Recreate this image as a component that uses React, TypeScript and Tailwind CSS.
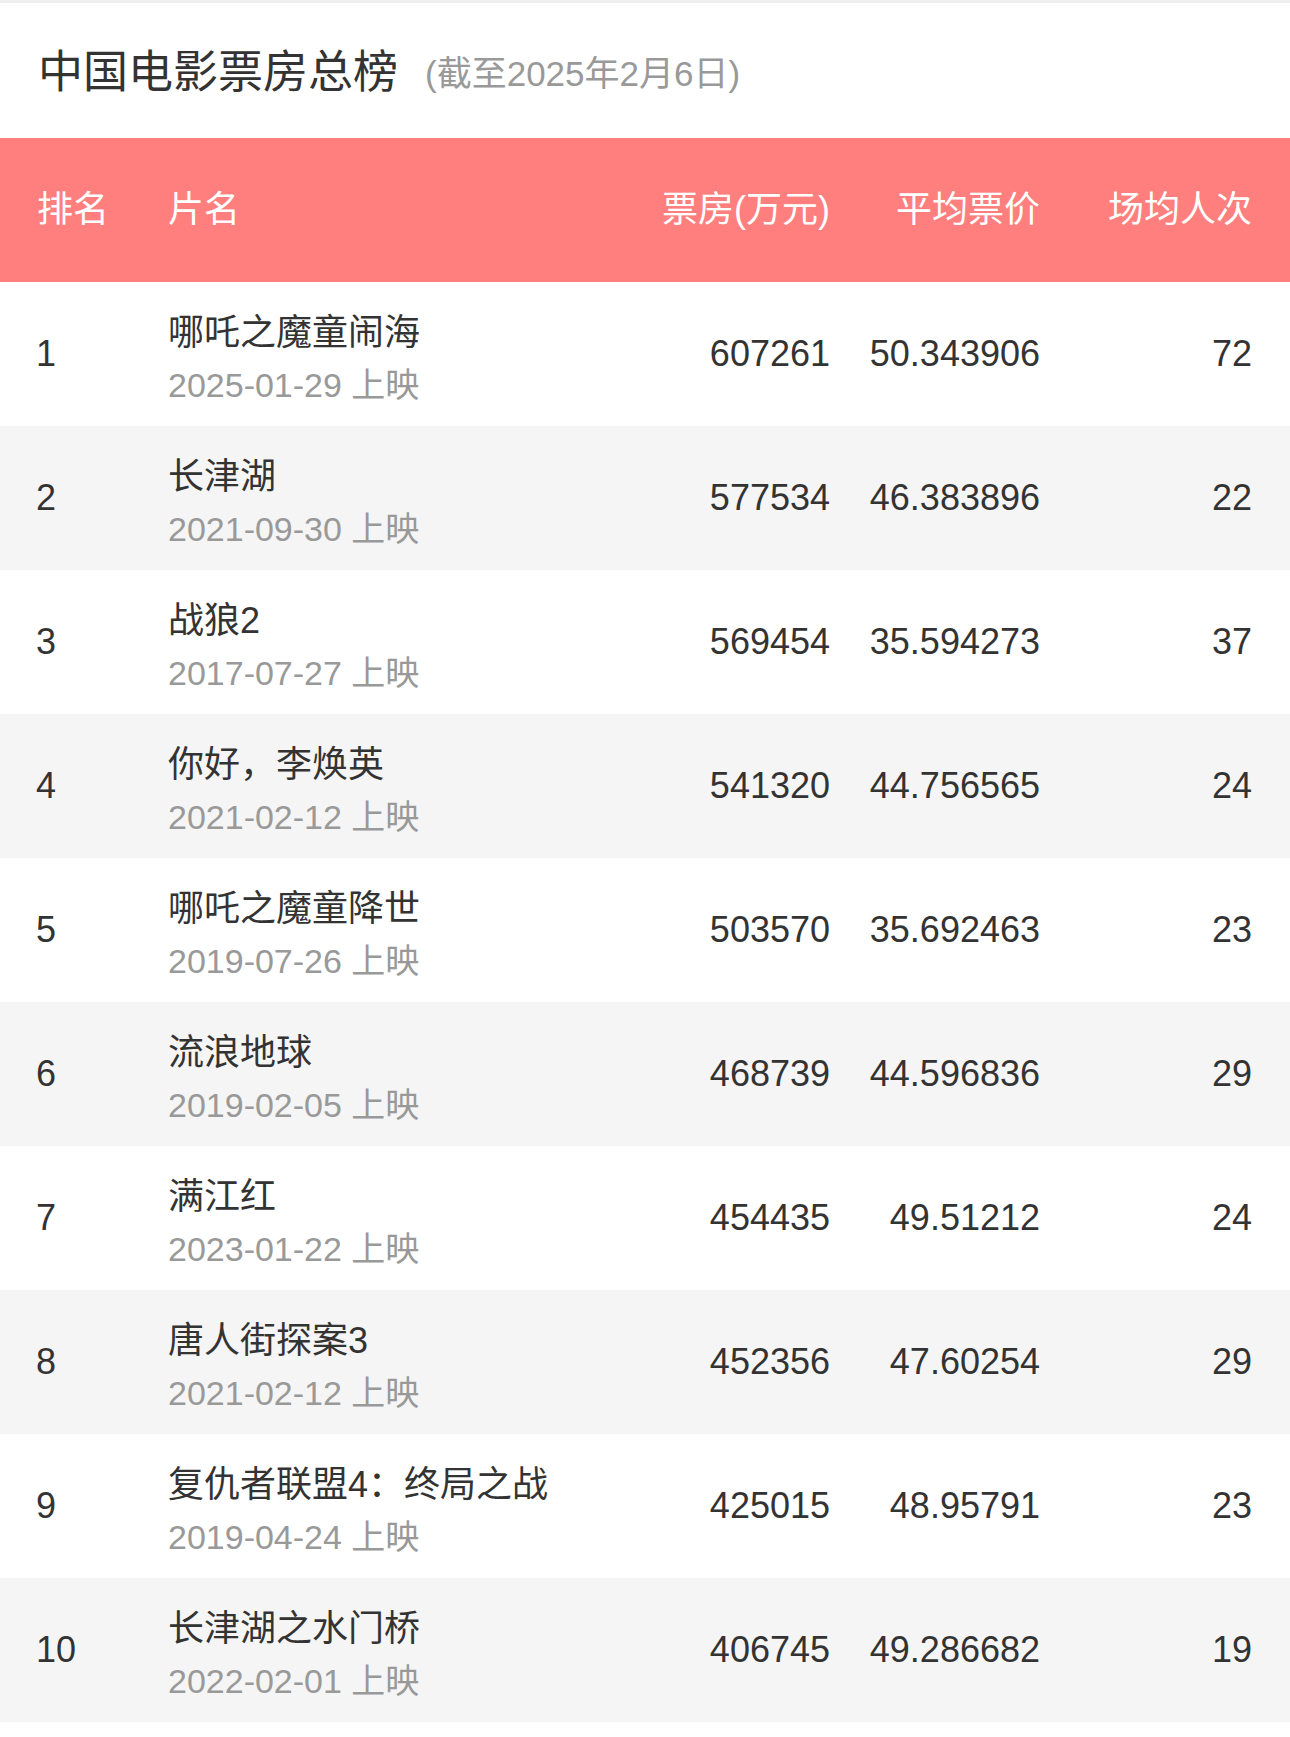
const rows = [
  { rank: 1, name: '哪吒之魔童闹海', date: '2025-01-29', box: '607261', avg: '50.343906', per: '72' },
  { rank: 2, name: '长津湖', date: '2021-09-30', box: '577534', avg: '46.383896', per: '22' },
  { rank: 3, name: '战狼2', date: '2017-07-27', box: '569454', avg: '35.594273', per: '37' },
  { rank: 4, name: '你好，李焕英', date: '2021-02-12', box: '541320', avg: '44.756565', per: '24' },
  { rank: 5, name: '哪吒之魔童降世', date: '2019-07-26', box: '503570', avg: '35.692463', per: '23' },
  { rank: 6, name: '流浪地球', date: '2019-02-05', box: '468739', avg: '44.596836', per: '29' },
  { rank: 7, name: '满江红', date: '2023-01-22', box: '454435', avg: '49.51212', per: '24' },
  { rank: 8, name: '唐人街探案3', date: '2021-02-12', box: '452356', avg: '47.60254', per: '29' },
  { rank: 9, name: '复仇者联盟4：终局之战', date: '2019-04-24', box: '425015', avg: '48.95791', per: '23' },
  { rank: 10, name: '长津湖之水门桥', date: '2022-02-01', box: '406745', avg: '49.286682', per: '19' },
]

const font = { fontFamily: '"Liberation Sans", "Noto Sans CJK SC", sans-serif' }

export default function App() {
  return (
    <div className="w-[1290px] min-h-[1737px] bg-white" style={font}>
      <div className="h-[3px] bg-[#eeeeee]" />

      <div className="h-[135px] flex items-center pl-[38px] pt-[4px]">
        <h1 className="text-[45px] text-[#333333]">中国电影票房总榜</h1>
        <span className="ml-[27px] mt-[4px] text-[35px] text-[#999999]">(截至2025年2月6日)</span>
      </div>

      <div className="h-[144px] bg-[#ff7f7e] flex items-center pl-[37px] pr-[38px] text-white text-[36px]">
        <div className="w-[131px]">排名</div>
        <div className="flex-1">片名</div>
        <div className="text-right">票房(万元)</div>
        <div className="w-[210px] text-right">平均票价</div>
        <div className="w-[212px] text-right">场均人次</div>
      </div>

      {rows.map((r, i) => (
        <div
          key={r.rank}
          className={`h-[144px] flex items-center pl-[36px] pr-[38px] text-[#333333] ${
            i % 2 === 1 ? 'bg-[#f5f5f5]' : 'bg-white'
          }`}
        >
          <div className="w-[132px] text-[36px]">{r.rank}</div>
          <div className="flex-1 self-stretch pt-[25px]">
            <div className="text-[36px] leading-[52px]">{r.name}</div>
            <div className="text-[34px] leading-[52px] text-[#999999]">{r.date} 上映</div>
          </div>
          <div className="text-right text-[36px]">{r.box}</div>
          <div className="w-[210px] text-right text-[36px]">{r.avg}</div>
          <div className="w-[212px] text-right text-[36px]">{r.per}</div>
        </div>
      ))}
    </div>
  )
}
